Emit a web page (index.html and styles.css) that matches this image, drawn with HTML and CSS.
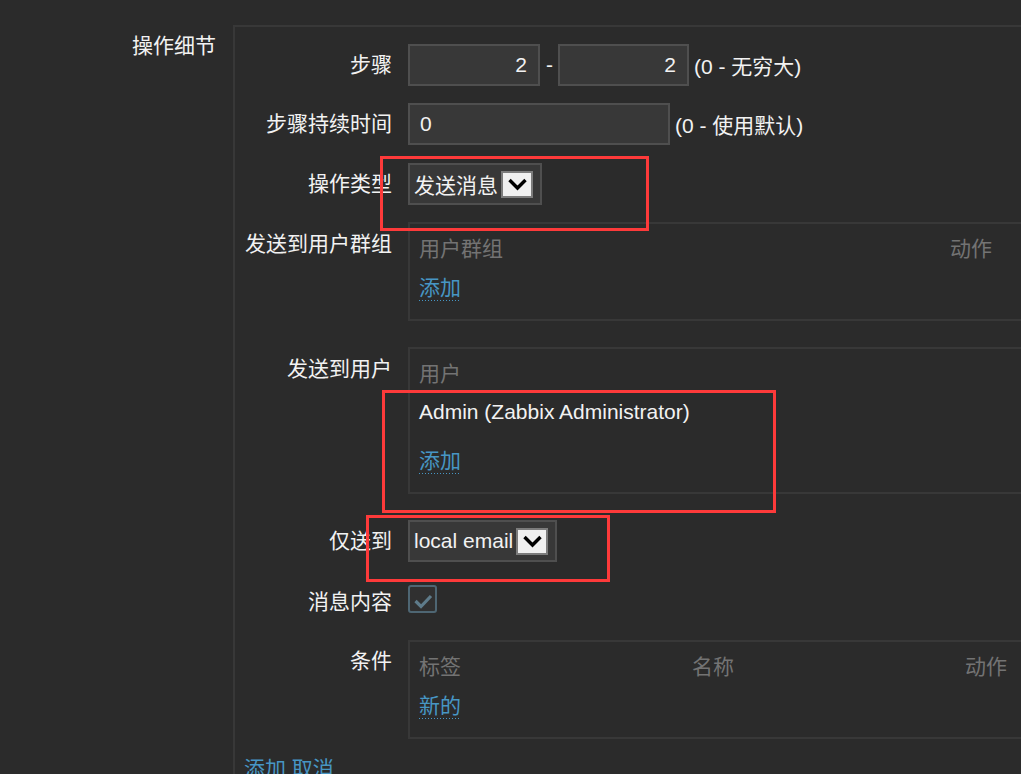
FILE: index.html
```html
<!DOCTYPE html>
<html lang="zh-CN">
<head>
<meta charset="utf-8">
<title>操作细节</title>
<link rel="stylesheet" href="styles.css">
</head>
<body>
<div class="page">
  <div class="section-title">操作细节</div>
  <div class="box">
    <div class="row row-input gap17">
      <div class="lbl">步骤</div>
      <div class="field">
        <div class="input num w132">2</div><span class="dash">-</span><div class="input num w131">2</div><span class="hint">(0 - 无穷大)</span>
      </div>
    </div>
    <div class="row row-input gap18">
      <div class="lbl">步骤持续时间</div>
      <div class="field">
        <div class="input w262">0</div><span class="hint">(0 - 使用默认)</span>
      </div>
    </div>
    <div class="row row-input gap17">
      <div class="lbl">操作类型</div>
      <div class="field">
        <div class="select"><span>发送消息</span><span class="arrow"><svg width="28" height="23" viewBox="0 0 28 23"><path d="M6.5 7 L14.5 15 L22.5 7" fill="none" stroke="#000" stroke-width="3.4"/></svg></span></div>
      </div>
    </div>
    <div class="row row-table gap26">
      <div class="lbl">发送到用户群组</div>
      <div class="tbl">
        <div class="trow cols-1 thead"><span>用户群组</span><span>动作</span></div>
        <div class="trow"><span class="link">添加</span></div>
      </div>
    </div>
    <div class="row row-table gap26">
      <div class="lbl">发送到用户</div>
      <div class="tbl">
        <div class="trow thead"><span>用户</span></div>
        <div class="trow user">Admin (Zabbix Administrator)</div>
        <div class="trow"><span class="link">添加</span></div>
      </div>
    </div>
    <div class="row row-input gap23">
      <div class="lbl">仅送到</div>
      <div class="field">
        <div class="select"><span>local email</span><span class="arrow"><svg width="28" height="23" viewBox="0 0 28 23"><path d="M6.5 7 L14.5 15 L22.5 7" fill="none" stroke="#000" stroke-width="3.4"/></svg></span></div>
      </div>
    </div>
    <div class="row row-check gap21">
      <div class="lbl">消息内容</div>
      <div class="field-check">
        <span class="checkbox"><svg width="24" height="24" viewBox="0 0 24 24"><path d="M4.5 12 L10 17.5 L20 7" fill="none" stroke="#5e7b8a" stroke-width="3.2"/></svg></span>
      </div>
    </div>
    <div class="row row-table row-cond gap17">
      <div class="lbl">条件</div>
      <div class="tbl">
        <div class="trow cols-3 thead"><span>标签</span><span>名称</span><span>动作</span></div>
        <div class="trow"><span class="link">新的</span></div>
      </div>
    </div>
    <div class="actions"><span class="plain-link">添加</span> <span class="plain-link">取消</span></div>
  </div>
</div>
<div class="mark m1"></div>
<div class="mark m2"></div>
<div class="mark m3"></div>
</body>
</html>
```
FILE: styles.css
```css
html, body {
  margin: 0;
  padding: 0;
}
body {
  background: #2b2b2b;
  color: #f2f2f2;
  font-family: "Liberation Sans", "Noto Sans CJK SC", sans-serif;
  font-size: 21px;
  overflow: hidden;
  height: 774px;
}
.page {
  display: flex;
  padding-top: 25px;
}
.section-title {
  width: 216px;
  flex: 0 0 216px;
  text-align: right;
  line-height: 30px;
  padding-top: 6px;
  margin-right: 17px;
  color: #f2f2f2;
}
.box {
  flex: 1;
  margin-right: -20px;
  border-top: 2px solid #383838;
  border-left: 2px solid #383838;
  padding-top: 17px;
  min-height: 800px;
}
.row {
  display: grid;
  grid-template-columns: 157px 1fr;
  column-gap: 16px;
}
.gap17 { margin-bottom: 17px; }
.gap18 { margin-bottom: 18px; }
.gap21 { margin-bottom: 21px; }
.gap23 { margin-bottom: 23px; }
.gap26 { margin-bottom: 26px; }
.lbl {
  text-align: right;
  color: #f2f2f2;
  white-space: nowrap;
}
.row-input .lbl { line-height: 42px; }
.row-table .lbl { line-height: 30px; padding-top: 7px; }
.row-cond .lbl { padding-top: 6px; }
.row-check .lbl { line-height: 34px; }

.field {
  display: flex;
  align-items: center;
  height: 42px;
}
.input {
  box-sizing: border-box;
  height: 42px;
  background: #383838;
  border: 2px solid #4f4f4f;
  line-height: 38px;
  padding: 0 10px;
  color: #f2f2f2;
}
.input.num { text-align: right; padding-right: 11px; }
.w132 { width: 132px; }
.w131 { width: 131px; }
.w262 { width: 262px; }
.dash { margin: 0 5px 0 6px; }
.hint { margin-left: 5px; }

.select {
  box-sizing: border-box;
  height: 42px;
  display: flex;
  align-items: center;
  gap: 3px;
  background: #383838;
  border: 2px solid #4f4f4f;
  padding: 0 7px 0 4px;
  white-space: nowrap;
}
.arrow {
  box-sizing: border-box;
  width: 32px;
  height: 27px;
  background: #f0f0f0;
  border: 2px solid #7c7c7c;
  display: flex;
}
.arrow svg { display: block; }

.field-check {
  display: flex;
  align-items: flex-start;
}
.checkbox {
  box-sizing: border-box;
  width: 29px;
  height: 28px;
  border: 2px solid #4e6673;
  border-radius: 3px;
  background: #303030;
  display: flex;
  align-items: center;
  justify-content: center;
}
.checkbox svg { display: block; margin-top: 3px; }

.tbl {
  border: 2px solid #383838;
  padding: 6px 9px 13px;
}
.trow {
  line-height: 38px;
  height: 38px;
}
.thead { color: #737373; }
.cols-1 {
  display: grid;
  grid-template-columns: 531px auto;
}
.cols-3 {
  display: grid;
  grid-template-columns: 273px 273px auto;
}
.user {
  margin-bottom: 10px;
}
.link {
  display: inline-block;
  line-height: 26px;
  vertical-align: middle;
  color: #4796c4;
  background-image: linear-gradient(to right, #4796c4 1px, transparent 1px);
  background-repeat: repeat-x;
  background-size: 3px 1px;
  background-position: 0 100%;
}
.actions {
  padding-left: 9px;
  line-height: 30px;
  margin-top: -2px;
  color: #4796c4;
}
.plain-link { color: #4796c4; }

.mark {
  position: absolute;
  box-sizing: border-box;
  border: 3px solid #fd3a3a;
}
.m1 { left: 380px; top: 156px; width: 269px; height: 75px; }
.m2 { left: 382px; top: 390px; width: 394px; height: 123px; }
.m3 { left: 366px; top: 515px; width: 244px; height: 67px; }
```
